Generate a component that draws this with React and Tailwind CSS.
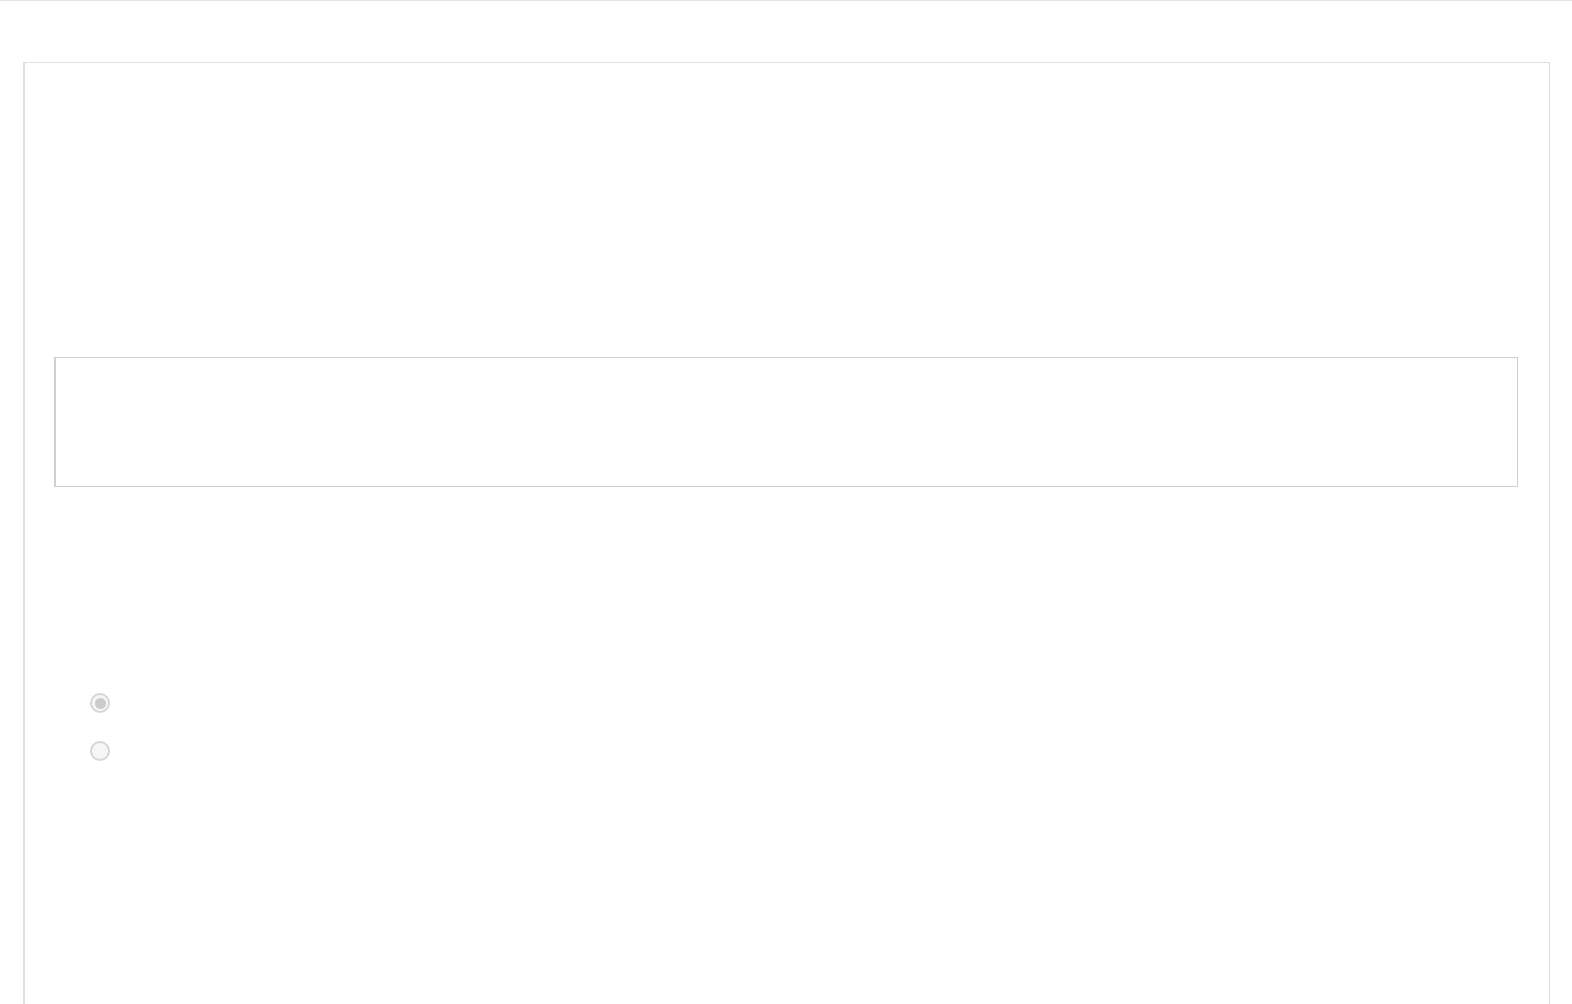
import React from "react";

function Radio({ checked }) {
  return (
    <span className="flex h-[20px] w-[20px] items-center justify-center rounded-full border-2 border-[#d6d6d6] bg-[#f6f6f6]">
      {checked && <span className="h-[11px] w-[11px] rounded-full bg-[#cbcbcb]" />}
    </span>
  );
}

export default function App() {
  return (
    <div className="min-h-screen overflow-hidden border-t border-[#e2e2e2] bg-white pl-[23px] pr-[22px] pt-[61px] font-['Liberation_Sans',sans-serif]">
      {/* card */}
      <div className="h-[1100px] border border-[#dedede] border-l-2 pl-[29px] pr-[31px] pt-[294px]">
        {/* text box */}
        <div className="h-[130px] border border-l-2 border-[#cbd0d8] bg-white" />

        {/* radio group */}
        <div className="mt-[206px] flex flex-col gap-[28px] pl-[36px]">
          <Radio checked />
          <Radio />
        </div>
      </div>
    </div>
  );
}
